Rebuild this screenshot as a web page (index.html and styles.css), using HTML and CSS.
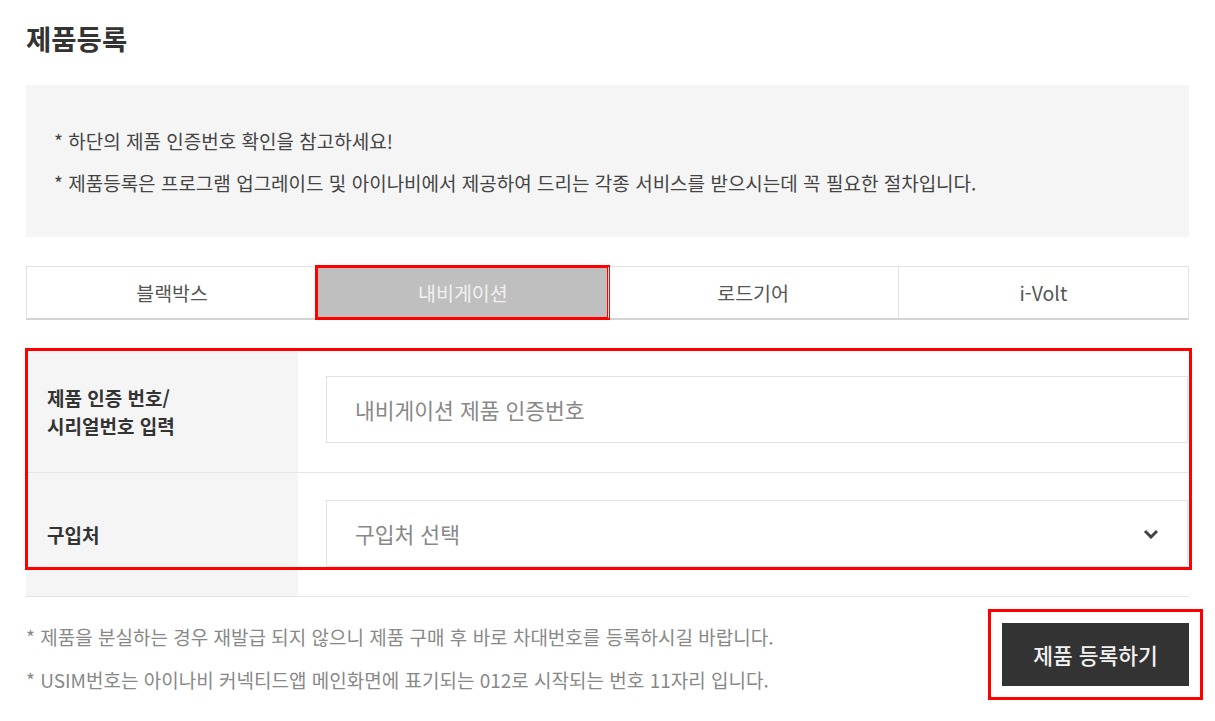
FILE: index.html
```html
<!DOCTYPE html>
<html lang="ko">
<head>
    <meta charset="UTF-8">
    <meta name="viewport" content="width=device-width, initial-scale=1.0">
    <title>제품등록</title>
    <link rel="stylesheet" href="styles.css">
</head>
<body>
    <div class="page">
        <h1 class="title">제품등록</h1>

        <!-- 안내 -->
        <div class="info-box">
            <p>* 하단의 제품 인증번호 확인을 참고하세요!</p>
            <p>* 제품등록은 프로그램 업그레이드 및 아이나비에서 제공하여 드리는 각종 서비스를 받으시는데 꼭 필요한 절차입니다.</p>
        </div>

        <!-- 제품 탭 -->
        <div class="tabs">
            <div class="tab">블랙박스</div>
            <div class="tab active">내비게이션</div>
            <div class="tab">로드기어</div>
            <div class="tab">i-Volt</div>
        </div>

        <!-- 입력 폼 -->
        <div class="form">
            <div class="form-row">
                <div class="form-label">제품 인증 번호/<br>시리얼번호 입력</div>
                <div class="form-field">
                    <input type="text" class="text-input" placeholder="내비게이션 제품 인증번호">
                </div>
            </div>
            <div class="form-row form-row-last">
                <div class="form-label">구입처</div>
                <div class="form-field">
                    <div class="select-box">
                        <span>구입처 선택</span>
                        <svg width="16" height="10" viewBox="0 0 16 10"><polyline points="2,2 8,8 14,2" fill="none" stroke="#444" stroke-width="3"/></svg>
                    </div>
                </div>
            </div>
            <div class="highlight"></div>
        </div>

        <div class="footer">
            <div class="notes">
                <p>* 제품을 분실하는 경우 재발급 되지 않으니 제품 구매 후 바로 차대번호를 등록하시길 바랍니다.</p>
                <p>* USIM번호는 아이나비 커넥티드앱 메인화면에 표기되는 012로 시작되는 번호 11자리 입니다.</p>
            </div>
            <button class="btn-submit">제품 등록하기</button>
        </div>
    </div>
</body>
</html>
```

FILE: styles.css
```css
body { margin: 0; background: #fff; font-family: "Noto Sans CJK KR", "Noto Sans", sans-serif; color: #333; }
p { margin: 0; }
.page { padding: 19px 26px 40px; }
.title { margin: 0; font-size: 27.5px; line-height: 38px; font-weight: bold; color: #333; }

.info-box { margin-top: 28px; background: #f5f5f5; padding: 43px 28px 41px; display: flex; flex-direction: column; gap: 16px; }
.info-box p { font-size: 19px; line-height: 26px; color: #444; }

.tabs { margin-top: 29px; display: grid; grid-template-columns: repeat(4, 1fr); border: 1px solid #e2e2e2; border-bottom: 2px solid #d4d4d4; }
.tab { height: 51px; display: flex; align-items: center; justify-content: center; font-size: 19.5px; color: #555; border-left: 1px solid #e2e2e2; }
.tab:first-child { border-left: none; }
.tab.active { background: #bfbfbf; color: #f2f2f2; outline: 3px solid #f00; outline-offset: -1px; }

.form { position: relative; margin-top: 30px; border-top: 1px solid #e5e5e5; }
.form-row { display: grid; grid-template-columns: 272px 1fr; border-bottom: 1px solid #e5e5e5; }
.form-label { background: #f5f5f5; padding-left: 21px; display: flex; align-items: center; font-size: 19px; line-height: 28px; font-weight: bold; color: #333; }
.form-field { padding: 25px 1px 29px 28px; }
.form-row-last .form-field { padding: 27px 1px 29px 28px; }
.text-input { box-sizing: border-box; width: 100%; height: 67px; border: 1px solid #e2e2e2; padding: 0 28px; font-family: inherit; font-size: 21.5px; color: #333; outline: none; }
.text-input::placeholder { color: #888; }
.select-box { box-sizing: border-box; height: 67px; border: 1px solid #e2e2e2; padding: 0 28px; display: flex; align-items: center; justify-content: space-between; font-size: 21.5px; color: #888; }
.highlight { position: absolute; left: -1px; right: -3px; top: -3px; height: 222px; border: 3px solid #f00; box-sizing: border-box; pointer-events: none; }

.footer { display: flex; justify-content: space-between; align-items: flex-start; }
.notes { padding-top: 27px; display: flex; flex-direction: column; gap: 17px; }
.notes p { font-size: 19px; line-height: 26px; color: #888; }
.btn-submit { margin-top: 26px; width: 187px; height: 63px; border: none; background: #333; color: #f2f2f2; font-family: inherit; font-size: 21.5px; font-weight: 500; cursor: pointer; outline: 3px solid #f00; outline-offset: 11px; }
```
